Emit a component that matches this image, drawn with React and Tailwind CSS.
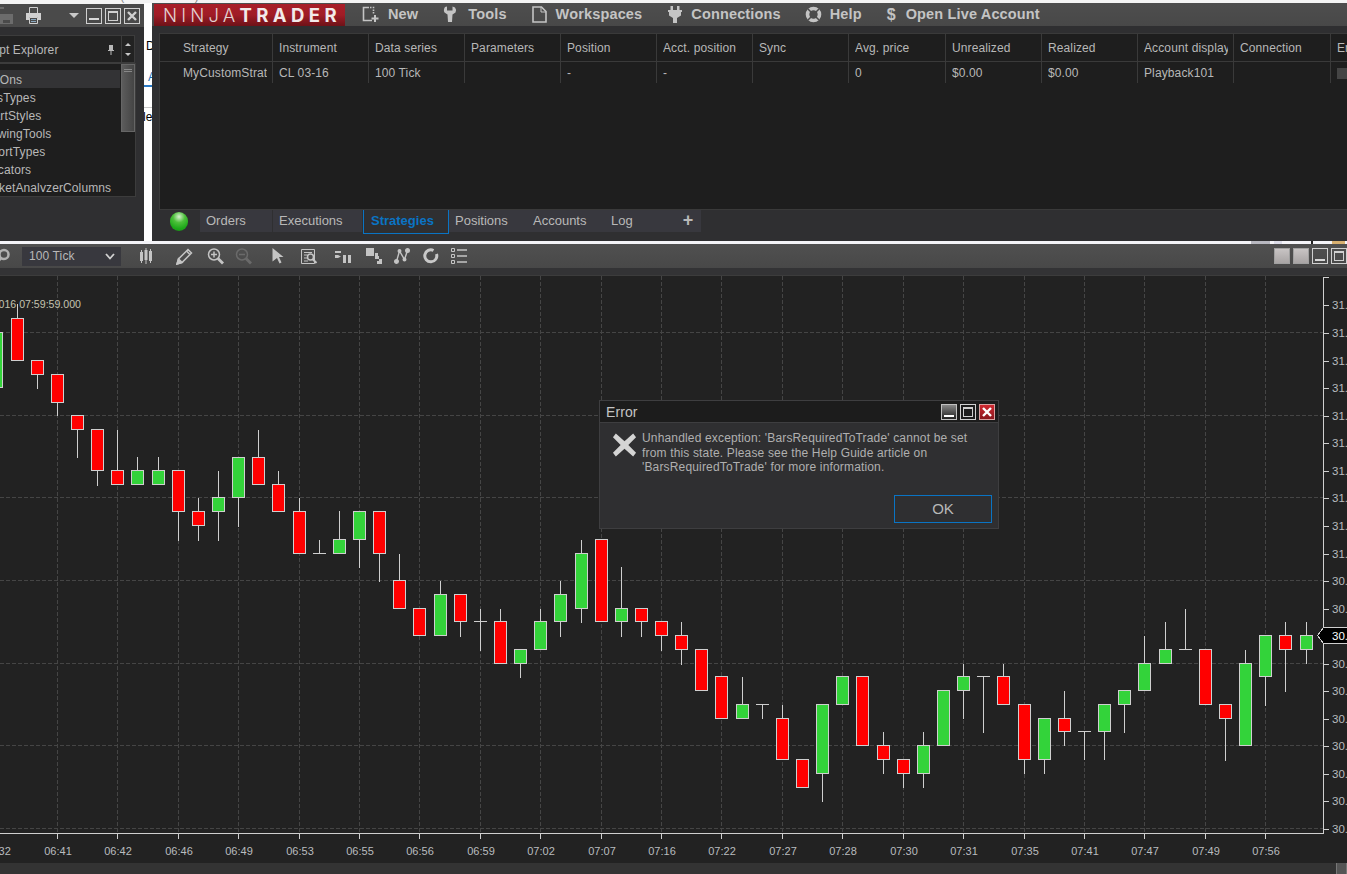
import React from "react";

const FONT = "font-['Liberation_Sans',Arial,sans-serif]";

// [cx, high, top, bottom, low, colour]
const R = "#ff0000";
const G = "#33d33a";
const candles = [
  [-3.5, 332, 332, 387, 387, G], [17.5, 304, 318, 360, 360, R], [37.5, 360, 360, 374, 388, R], [57.5, 374, 374, 402, 415, R],
  [77.5, 415, 415, 429, 457, R], [97.5, 429, 429, 470, 485, R], [117.5, 430, 470, 484, 484, R], [137.5, 457, 470, 484, 484, G],
  [158.5, 457, 470, 484, 484, G], [178.5, 470, 470, 511, 540, R], [198.5, 498, 511, 525, 540, R], [218.5, 471, 497, 511, 540, G],
  [238.5, 457, 457, 497, 526, G], [258.5, 430, 457, 484, 484, R], [278.5, 471, 484, 511, 511, R], [299.5, 498, 511, 553, 553, R],
  [319.5, 540, 553, 553, 553, "d"], [339.5, 511, 539, 553, 553, G], [359.5, 511, 511, 539, 567, G], [379.5, 511, 511, 553, 581, R],
  [399.5, 554, 580, 608, 608, R], [419.5, 608, 608, 635, 635, R], [440.5, 581, 594, 635, 635, G], [460.5, 594, 594, 621, 636, R],
  [480.5, 609, 621, 621, 650, "d"], [500.5, 609, 621, 663, 663, R], [520.5, 649, 649, 663, 677, G], [540.5, 609, 621, 649, 649, G],
  [560.5, 581, 594, 621, 636, G], [581.5, 540, 553, 608, 622, G], [601.5, 539, 539, 621, 621, R], [621.5, 567, 608, 621, 636, G],
  [641.5, 608, 608, 621, 636, R], [661.5, 621, 621, 635, 650, R], [681.5, 622, 635, 649, 664, R], [701.5, 649, 649, 690, 690, R],
  [721.5, 676, 676, 718, 718, R], [742.5, 677, 704, 718, 718, G], [762.5, 704, 704, 704, 718, "d"], [782.5, 705, 718, 759, 759, R],
  [802.5, 759, 759, 787, 787, R], [822.5, 704, 704, 773, 801, G], [842.5, 676, 676, 704, 704, G], [862.5, 676, 676, 745, 745, R],
  [883.5, 732, 745, 759, 773, R], [903.5, 759, 759, 773, 787, R], [923.5, 732, 745, 773, 787, G], [943.5, 690, 690, 745, 745, G],
  [963.5, 664, 676, 690, 718, G], [983.5, 676, 676, 676, 732, "d"], [1003.5, 664, 676, 704, 704, R], [1024.5, 704, 704, 759, 773, R],
  [1044.5, 718, 718, 759, 773, G], [1064.5, 691, 718, 731, 745, R], [1084.5, 731, 731, 731, 759, "d"], [1104.5, 704, 704, 731, 759, G],
  [1124.5, 690, 690, 704, 732, G], [1144.5, 636, 663, 690, 690, G], [1165.5, 622, 649, 663, 663, G], [1185.5, 609, 649, 649, 649, "d"],
  [1205.5, 649, 649, 704, 704, R], [1225.5, 704, 704, 718, 760, R], [1245.5, 650, 663, 745, 745, G], [1265.5, 635, 635, 676, 705, G],
  [1285.5, 622, 635, 649, 691, R], [1306.5, 622, 635, 649, 663, G],
];

const vGrid = [-3.5, 57.5, 117.5, 178.5, 238.5, 299.5, 359.5, 419.5, 480.5, 540.5, 601.5, 661.5, 721.5, 782.5, 842.5, 903.5, 963.5, 1024.5, 1084.5, 1144.5, 1205.5, 1265.5];
const times = ["06:32", "06:41", "06:42", "06:46", "06:49", "06:53", "06:55", "06:56", "06:59", "07:02", "07:07", "07:16", "07:22", "07:27", "07:28", "07:30", "07:31", "07:35", "07:41", "07:47", "07:49", "07:56"];
const hGrid = [332.5, 415.5, 497.5, 580.5, 663.5, 745.5, 828.5];
const priceY = [305, 333, 361, 388, 416, 443, 471, 498, 526, 554, 581, 609, 636, 664, 691, 719, 746, 774, 801, 829];

function Chart() {
  return (
    <svg viewBox="0 276 1347 587" width="1347" height="587" className="block" shapeRendering="crispEdges">
      {hGrid.map((y) => (
        <line key={y} x1="0" x2="1323" y1={y} y2={y} stroke="#454545" strokeDasharray="4 2" />
      ))}
      {vGrid.map((x) => (
        <line key={x} x1={x} x2={x} y1="276" y2="833" stroke="#454545" strokeDasharray="4 2" />
      ))}
      {candles.map(([x, h, t, b, l, c]) => {
        const doji = c === "d";
        return (
          <g key={x}>
            <line x1={x} x2={x} y1={h} y2={l + 1} stroke="#cfcfcf" />
            {doji ? (
              <line x1={x - 6.5} x2={x + 6.5} y1={t + 0.5} y2={t + 0.5} stroke="#cfcfcf" />
            ) : (
              <rect x={x - 6} y={t + 0.5} width="12" height={b - t} fill={c} stroke="#cfcfcf" />
            )}
          </g>
        );
      })}
      <line x1="0" x2="1324" y1="833.5" y2="833.5" stroke="#cfcfcf" />
      <line x1="1323.5" x2="1323.5" y1="277" y2="834" stroke="#cfcfcf" />
      <line x1="1323" x2="1329" y1="277.5" y2="277.5" stroke="#cfcfcf" />
      {vGrid.map((x) => (
        <line key={x} x1={x} x2={x} y1="834" y2="839" stroke="#cfcfcf" />
      ))}
      {priceY.map((y) => (
        <line key={y} x1="1324" x2="1329" y1={y + 0.5} y2={y + 0.5} stroke="#cfcfcf" />
      ))}
      <g shapeRendering="auto" fontFamily="'Liberation Sans', Arial, sans-serif" fontSize="11" fill="#b9bcbf">
        {times.map((t, i) => (
          <text key={t} x={vGrid[i] + 0.5} y="855" textAnchor="middle">{t}</text>
        ))}
        {priceY.map((y, i) => (y === 636 ? null : (
          <text key={y} x="1332" y={y + 4} fontSize="11.5">{i < 10 ? "31.25" : "30.75"}</text>
        )))}
        <text x="81" y="308" textAnchor="end" fill="#c2c2b0" fontSize="10.6">2016 07:59:59.000</text>
      </g>
      <polygon points="1317.5,635.5 1323.5,627.5 1348,627.5 1348,643.5 1323.5,643.5" fill="#000" stroke="#cfcfcf" />
      <text shapeRendering="auto" x="1332" y="640" fontFamily="'Liberation Sans', Arial, sans-serif" fontSize="11.5" fill="#fff">30.75</text>
    </svg>
  );
}

/* ---------- icons ---------- */
const IconNew = () => (
  <svg width="17" height="17" viewBox="0 0 17 17" fill="none" stroke="#c4c4c4" strokeWidth="1.6">
    <path d="M10 14.5H1.500V1.500H7" /><path d="M8 1.500H11.500V8" strokeDasharray="1.500 1.200" />
    <path d="M13 9V16M9.500 12.500H16.500" strokeWidth="2" />
  </svg>
);
const IconWrench = () => (
  <svg width="14" height="17" viewBox="0 0 14 17" fill="#c4c4c4">
    <path d="M2 1 L4 0.5 V4.5 H9.5 V0.5 L12 1.5 Q14 4 12.5 6.5 L9.5 8.5 L9 16 H5 L4.5 8.5 L1.5 6.5 Q0 4 2 1Z" />
  </svg>
);
const IconDoc = () => (
  <svg width="15" height="17" viewBox="0 0 15 17" fill="none" stroke="#c4c4c4" strokeWidth="1.6">
    <path d="M1 1H9.5L14 5.5V16H1Z" /><path d="M9 1V6H14" strokeWidth="1" />
  </svg>
);
const IconPlug = () => (
  <svg width="14" height="17" viewBox="0 0 14 17" fill="#c4c4c4">
    <path d="M2.5 0h2.5v4h4V0h2.500v4H14v2h-1v3.500L9 12v5H5v-5L1 9.500V6H0V4h2.500Z" />
  </svg>
);
const IconHelp = () => (
  <svg width="17" height="17" viewBox="0 0 17 17" fill="none">
    <circle cx="8.500" cy="8.500" r="6" stroke="#c4c4c4" strokeWidth="3.600" />
    <path d="M3 3L6 6M14 3L11 6M3 14L6 11M14 14L11 11" stroke="#4a4a4a" strokeWidth="1.500" />
  </svg>
);
const IconCandles = () => (
  <svg width="14" height="16" viewBox="0 0 14 16" fill="#c4c4c4">
    <path d="M1 4h3v9H1zM5.500 2h3v10h-3zM10 3h3v10h-3z" /><path d="M2 2h1v13H2zM6.500 0h1v16h-1zM11 1h1v14h-1z" />
  </svg>
);
const IconPencil = () => (
  <svg width="17" height="17" viewBox="0 0 17 17" fill="none" stroke="#c4c4c4" strokeWidth="1.500">
    <path d="M1 16L2.500 11L12 1.500L15.500 5L6 14.500Z" /><path d="M10.500 3L14 6.500" />
    <path d="M1 16L2.500 11L6 14.500Z" fill="#c4c4c4" />
  </svg>
);
const IconZoom = ({ plus, color = "#c4c4c4" }) => (
  <svg width="17" height="17" viewBox="0 0 17 17" fill="none" stroke={color}>
    <circle cx="7" cy="6.500" r="5.500" strokeWidth="1.500" />
    <path d="M11 10.500L16 15.500" strokeWidth="2.800" />
    <path d="M4 6.500H10" strokeWidth="1.500" />
    {plus && <path d="M7 3.500V9.500" strokeWidth="1.500" />}
  </svg>
);
const IconPointer = () => (
  <svg width="12" height="16" viewBox="0 0 12 16" fill="#c4c4c4"><path d="M0.500 0L11.500 9H7L9.500 14.500L7.500 15.500L5 10L0.500 13.500Z" /></svg>
);
const IconDocSearch = () => (
  <svg width="17" height="15" viewBox="0 0 17 15" fill="none" stroke="#c4c4c4">
    <path d="M0.500 0.500H13.500V14.500H0.500Z" /><path d="M3 3.500H11M3 6H6M3 9H6M3 12H7" />
    <circle cx="9.500" cy="8" r="3" strokeWidth="1.500" /><path d="M11.500 10L15.500 14" strokeWidth="2" />
  </svg>
);
const IconBars = () => (
  <svg width="17" height="13" viewBox="0 0 17 13" fill="#c4c4c4">
    <path d="M0 1h6v2H0zM0 5h3l3 1.500L3 8H0zM8 5h3v8H8zM13 5h3v8h-3z" />
  </svg>
);
const IconSquares = () => (
  <svg width="16" height="16" viewBox="0 0 16 16" fill="#c4c4c4"><path d="M0 0h8v8H0zM9 5h3v3h1v3H9zM13 11h3v5h-5v-3h2z" /></svg>
);
const IconNodes = () => (
  <svg width="16" height="16" viewBox="0 0 16 16" fill="none" stroke="#c4c4c4" strokeWidth="1.400">
    <path d="M2.500 13.500L5.500 3L10.500 11.500L13.500 2.500" />
    <circle cx="2.500" cy="13.500" r="1.800" fill="#c4c4c4" /><circle cx="13.500" cy="2.500" r="1.800" fill="#c4c4c4" />
    <circle cx="5.500" cy="3" r="1.300" fill="#c4c4c4" /><circle cx="10.500" cy="11.500" r="1.300" fill="#c4c4c4" />
  </svg>
);
const IconCircle = () => (
  <svg width="16" height="16" viewBox="0 0 16 16" fill="none">
    <path d="M10.500 2.500A6 6 0 1 0 13.500 6" stroke="#c8c8c8" strokeWidth="3" />
  </svg>
);
const IconList = () => (
  <svg width="16" height="16" viewBox="0 0 16 16" fill="none" stroke="#c4c4c4">
    <path d="M0.500 0.500h3v3h-3zM0.500 6.500h3v3h-3zM0.500 12.500h3v3h-3z" /><path d="M6 2h10M6 8h10M6 14h10" strokeWidth="1.500" />
  </svg>
);
const IconPrinter = () => (
  <svg width="17" height="17" viewBox="0 0 17 17">
    <path d="M4.500 6V0.500H12.500V6" fill="#4a4a4a" stroke="#d0d0d0" />
    <path d="M1 6h15v7h-3v-2.500H4V13H1z" fill="#d0d0d0" />
    <path d="M4.500 10.500h8v6h-8z" fill="#4a4a4a" stroke="#d0d0d0" />
    <path d="M6 12.500h5M6 14.500h5" stroke="#8aa8c0" />
  </svg>
);
const IconSave = () => (
  <svg width="16" height="17" viewBox="0 0 16 17" fill="#6c6c6c">
    <path d="M0 0h7v2H3v5h4v2H0z" /><path d="M3 7h13v10H3z" /><path d="M6 13h7v3H6z" fill="#4a4a4a" />
  </svg>
);
const WinBtn = ({ kind, red }) => (
  <div className={`w-4 h-4 border flex items-center justify-center ${red ? "border-[#d9a0a0] bg-gradient-to-b from-[#d02830] to-[#8a181e]" : "border-[#d0d0d0]"}`}>
    {kind === "min" && <div className="w-2.5 h-0.5 bg-[#d8d8d8] mt-[7px]" />}
    {kind === "max" && <div className="w-2.5 h-2.5 border border-[#d0d0d0] border-t-2" />}
    {kind === "close" && (
      <svg width="10" height="10" viewBox="0 0 10 10" stroke={red ? "#fff" : "#d0d0d0"} strokeWidth="2.400"><path d="M1 1L9 9M9 1L1 9" /></svg>
    )}
  </div>
);

const Col = ({ children, first, last }) => (
  <div className={`flex items-center overflow-hidden ${first ? "pl-[23px]" : "pl-1.5"} ${last ? "" : "border-r border-[#3a3a3a]"}`}>
    <span className={`block flex-1 min-w-0 overflow-hidden whitespace-nowrap tracking-[0.12px] ${last ? "" : "mr-[5px]"}`}>{children}</span>
  </div>
);

const headers = ["Strategy", "Instrument", "Data series", "Parameters", "Position", "Acct. position", "Sync", "Avg. price", "Unrealized", "Realized", "Account display", "Connection", "Enabled"];
const values = ["MyCustomStrategy", "CL 03-16", "100 Tick", "", "-", "-", "", "0", "$0.00", "$0.00", "Playback101", "", ""];
const grid = "grid grid-cols-[113px_96px_96px_96px_96px_96px_96px_97px_96px_96px_96px_97px_1fr]";
const tree = ["AddOns", "BarsTypes", "ChartStyles", "DrawingTools", "ImportTypes", "Indicators", "MarketAnalyzerColumns"];

const Menu = ({ icon, label, className }) => (
  <div className={`flex items-center h-full ${className}`}>
    {icon}
    <span className="text-[14.500px] font-bold text-[#c4c4c4] tracking-[0.15px] pt-px">{label}</span>
  </div>
);

export default function App() {
  return (
    <div className={`relative w-[1347px] h-[874px] overflow-hidden bg-[#2f2f31] ${FONT} text-[12px] text-[#b8b8b8]`}>
      {/* desktop strip behind the windows */}
      <div className="h-[3px] bg-[#f4f4f4] overflow-hidden">
        <div className="-mt-[11px] -ml-[5px] text-[12px] leading-[14px] text-[#8a8a8a] whitespace-nowrap">Microsoft Visual Studio (Administrator)</div>
      </div>

      <div className="flex h-[238px]">
        {/* left window */}
        <div className="w-[144px] bg-[#f4f4f4] pt-px shrink-0">
          <div className="h-[237px] bg-[#2f2f31] flex flex-col overflow-hidden">
            <div className="h-[23px] bg-[#4a4a4a] flex items-center shrink-0">
              <div className="ml-[-3px]"><IconSave /></div>
              <div className="ml-[12px]"><IconPrinter /></div>
              <div className="ml-[27px] w-0 h-0 border-x-[5px] border-x-transparent border-t-[5px] border-t-[#c8c8c8]" />
              <div className="ml-[7px]"><WinBtn kind="min" /></div>
              <div className="ml-[3px]"><WinBtn kind="max" /></div>
              <div className="ml-[3px]"><WinBtn kind="close" /></div>
            </div>
            <div className="mt-2 h-[28px] flex w-[135px] shrink-0">
              <div className="w-[122px] border border-l-0 border-[#3c3c3c] bg-[#222] flex items-center overflow-hidden pt-0.5">
                <span className="ml-[-22px] whitespace-nowrap tracking-[0.12px]">Script Explorer</span>
                <svg className="ml-auto mr-[7px]" width="6" height="10" viewBox="0 0 6 10" fill="#b8b8b8"><path d="M1 0h4v5h1v1H3.500v4h-1V6H0V5h1z" /></svg>
              </div>
              <div className="w-[13px] border border-l-0 border-[#3c3c3c] bg-[#222] flex flex-col items-center justify-center gap-[7px]">
                <div className="w-0 h-0 border-x-[3px] border-x-transparent border-b-[3px] border-b-[#c8c8c8]" />
                <div className="w-0 h-0 border-x-[3px] border-x-transparent border-t-[3px] border-t-[#c8c8c8]" />
              </div>
            </div>
            <div className="h-[134px] w-[136px] border border-l-0 border-[#3c3c3c] bg-[#1e1e1e] flex shrink-0">
              <div className="w-[120px] pt-[6px]">
                <div className="h-[122px] overflow-hidden">
                  {tree.map((t, i) => (
                    <div key={t} className={`h-[18px] leading-[20px] overflow-hidden whitespace-nowrap ${i === 0 ? "bg-[#333335]" : ""}`}>
                      <span className="ml-[-22px] block tracking-[0.12px]">{t}</span>
                    </div>
                  ))}
                </div>
              </div>
              <div className="w-[14px] ml-px">
                <div className="h-[68px] bg-gradient-to-r from-[#5c5c5c] to-[#454545] border border-[#666] flex flex-col items-center pt-1 gap-px">
                  <div className="w-2 h-px bg-[#888]" /><div className="w-2 h-px bg-[#888]" />
                </div>
              </div>
            </div>
          </div>
        </div>

        {/* sliver of the window behind */}
        <div className="w-2 bg-white text-black text-[12px] overflow-hidden shrink-0 pt-[36px]">
          <div className="ml-[2px] h-[14px] leading-[14px]">D</div>
          <div className="ml-[4px] mt-[17px] h-[15px] leading-[15px] text-[#1c6fb8]">A</div>
          <div className="h-0.5 bg-[#2a7bc8]" />
          <div className="mt-5 h-px bg-[#c8c8c8]" />
          <div className="ml-[-1px] mt-[2px] leading-[14px] whitespace-nowrap">le</div>
        </div>

        {/* right window */}
        <div className="flex-1 min-w-0 flex flex-col bg-[#2f2f31]">
          <div className="h-[23px] flex items-stretch bg-gradient-to-b from-[#4e4e4e] to-[#484848] shrink-0">
            <div className="ml-[2px] w-[191px] mt-px bg-gradient-to-b from-[#a81e28] via-[#a01c26] to-[#6e1218] flex items-center pl-[9px] text-[18.500px] leading-none whitespace-nowrap font-['Inter',sans-serif] text-[#e2d2d2] overflow-hidden">
              <span className="font-light tracking-[4.200px]">NINJA</span><span className="font-bold tracking-[4.400px] text-[#f2eaea]">TRADER</span>
            </div>
            <Menu className="ml-[17px] gap-[9px]" icon={<IconNew />} label="New" />
            <Menu className="ml-[25px] gap-[11px]" icon={<IconWrench />} label="Tools" />
            <Menu className="ml-[25px] gap-[9px]" icon={<IconDoc />} label="Workspaces" />
            <Menu className="ml-[26px] gap-[9px]" icon={<IconPlug />} label="Connections" />
            <Menu className="ml-[24px] gap-[8px]" icon={<IconHelp />} label="Help" />
            <Menu className="ml-[25px] gap-[10px]" icon={<span className="text-[16px] font-bold text-[#c4c4c4]">$</span>} label="Open Live Account" />
          </div>
          <div className="ml-[7px] mt-[7px] h-[177px] bg-[#1e1e1e] border-l border-t border-b border-[#3a3a3a] overflow-hidden shrink-0">
            <div className={`${grid} h-[28px] border-b border-[#3a3a3a]`}>
              {headers.map((h, i) => <Col key={h} first={i === 0} last={i === 12}>{h}</Col>)}
            </div>
            <div className={`${grid} h-[21px]`}>
              {values.map((v, i) => (
                <Col key={i} first={i === 0} last={i === 12}>
                  {i === 12 ? <span className="block w-[11px] h-[11px] bg-[#444] mt-px" /> : v}
                </Col>
              ))}
            </div>
          </div>
          <div className="flex h-[22px] ml-[18px] text-[13px] shrink-0">
            <div className="w-[18px] h-[19px] mt-[2px] rounded-full bg-[radial-gradient(circle_at_50%_25%,#d8f0d0_0%,#4cc03a_35%,#1ea81a_70%,#178a15_100%)]" />
            <div className="ml-[12px] w-[72px] bg-[#38383e] pl-1.5 leading-[22px]">Orders</div>
            <div className="ml-px w-[89px] bg-[#38383e] pl-1.5 leading-[22px]">Executions</div>
            <div className="ml-px w-[86px] h-[24px] border border-t-0 border-[#0a74c4] pl-[7px] leading-[22px] font-bold text-[#0a74c4]">Strategies</div>
            <div className="w-[76px] bg-[#38383e] pl-1.5 leading-[22px]">Positions</div>
            <div className="w-[78px] bg-[#38383e] pl-2 leading-[22px]">Accounts</div>
            <div className="w-[72px] bg-[#38383e] pl-2 leading-[22px]">Log</div>
            <div className="w-[26px] bg-[#38383e] text-center text-[18px] leading-[20px] font-bold">+</div>
          </div>
        </div>
      </div>

      {/* white gap */}
      <div className="h-[3px] bg-[#f4f4f8] flex">
        <div className="ml-[1251px] w-[19px] bg-[#b8b8c0]" />
        <div className="ml-1 w-2 bg-[#dcdce8]" />
        <div className="ml-[29px] w-0.5 bg-[#222]" />
        <div className="ml-[19px] w-[13px] bg-[#d8b070]" />
      </div>

      {/* chart window */}
      <div className="h-[24px] bg-gradient-to-b from-[#505050] to-[#484848] flex items-center">
        <svg className="ml-[-5px]" width="17" height="17" viewBox="0 0 17 17" fill="none" stroke="#b0b0b0">
          <circle cx="9" cy="6.500" r="4.500" strokeWidth="2.500" /><path d="M6 10L2 15" strokeWidth="2.500" />
        </svg>
        <div className="ml-[10px] w-[99px] h-[19px] bg-[#38383e] flex items-center pl-[7px] pr-[6px] tracking-[0.12px]">
          <span>100 Tick</span>
          <svg className="ml-auto" width="10" height="7" viewBox="0 0 10 7" fill="none" stroke="#d0d0d0" strokeWidth="1.800"><path d="M1 1L5 5.500L9 1" /></svg>
        </div>
        <div className="ml-[18px]"><IconCandles /></div>
        <div className="ml-[23px]"><IconPencil /></div>
        <div className="ml-[14px]"><IconZoom plus /></div>
        <div className="ml-[11px]"><IconZoom color="#6a6a6a" /></div>
        <div className="ml-[20px]"><IconPointer /></div>
        <div className="ml-[17px]"><IconDocSearch /></div>
        <div className="ml-[17px]"><IconBars /></div>
        <div className="ml-[14px]"><IconSquares /></div>
        <div className="ml-[12px]"><IconNodes /></div>
        <div className="ml-[13px]"><IconCircle /></div>
        <div className="ml-[12px]"><IconList /></div>
        <div className="ml-auto flex gap-[3px]">
          <div className="w-4 h-4 border border-[#a0a0a0] bg-gradient-to-b from-[#c8c4c4] to-[#a8a4a4]" />
          <div className="w-4 h-4 border border-[#a0a0a0] bg-gradient-to-b from-[#c8c4c4] to-[#a8a4a4]" />
          <WinBtn kind="min" />
          <WinBtn kind="max" />
        </div>
      </div>
      <div className="h-[8px] bg-[#333335] border-b border-[#3c3c3c]" />
      <div className="bg-[#222222]"><Chart /></div>
      <div className="h-[11px] bg-[#333333] flex justify-end">
        <div className="w-[11px] h-full bg-[#555] border-x border-[#777]" />
      </div>

      {/* error dialog */}
      <div className="absolute left-[599px] top-[400px] w-[400px] h-[129px] border border-[#3e3e40] bg-[#2f2f31] flex flex-col">
        <div className="h-[22px] bg-[#1c1c1c] border-b border-[#3e3e40] flex items-center pl-[6px] pr-[3px] gap-[3px] shrink-0">
          <span className="text-[14px] text-[#c4c4c4] mr-auto tracking-[0.1px] pt-0.5">Error</span>
          <div className="w-4 h-4 border border-[#c0c0c0] bg-gradient-to-b from-[#888] to-[#222] flex items-end justify-center pb-0.5"><div className="w-2.5 h-0.5 bg-white" /></div>
          <WinBtn kind="max" />
          <WinBtn kind="close" red />
        </div>
        <div className="flex pl-[12px] pt-[8px]">
          <svg className="mt-px shrink-0" width="25" height="26" viewBox="0 0 26 26" fill="#d4d4d4">
            <path d="M4 1L13 9L22 1L25 5L17 13L25 21L22 25L13 17L4 25L1 21L9 13L1 5Z" />
          </svg>
          <p className="ml-[5px] w-[340px] text-[12px] leading-[14.500px] tracking-[0.16px] text-[#b0b0b0]">
            Unhandled exception: 'BarsRequiredToTrade' cannot be set from this state. Please see the Help Guide article on 'BarsRequiredToTrade' for more information.
          </p>
        </div>
        <div className="absolute left-[294px] top-[94px] w-[98px] h-[28px] border border-[#0a74c4] text-center text-[15px] leading-[26px] text-[#b8b8b8]">OK</div>
      </div>
    </div>
  );
}
